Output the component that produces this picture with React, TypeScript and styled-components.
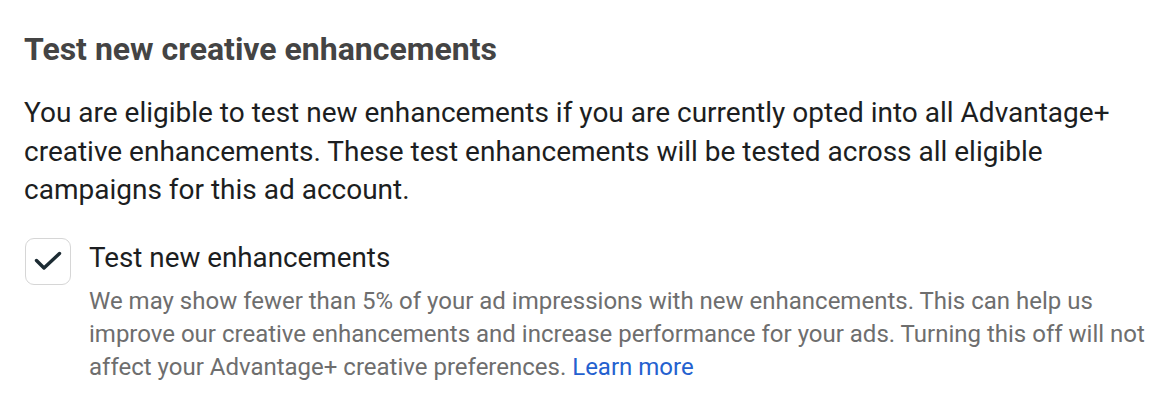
import { createGlobalStyle } from "styled-components";
import styled from "styled-components";

const GlobalStyle = createGlobalStyle`
  html, body {
    margin: 0;
    padding: 0;
    background: #ffffff;
  }
  body {
    font-family: Roboto, "Liberation Sans", Arial, sans-serif;
  }
`;

const Section = styled.section`
  width: 1176px;
  height: 414px;
  box-sizing: border-box;
  padding: 29px 24px 0 24px;
  background: #ffffff;
`;

const Title = styled.h2`
  margin: 0 0 25px 0;
  font-size: 32px;
  line-height: 40px;
  font-weight: 700;
  color: #444444;
`;

const Intro = styled.p`
  margin: 0 0 28px 0;
  font-size: 28px;
  line-height: 38.5px;
  font-weight: 400;
  color: #1c1e21;
`;

const OptionRow = styled.label`
  display: flex;
  align-items: flex-start;
  gap: 18px;
  cursor: pointer;
`;

const Checkbox = styled.span<{ $checked: boolean }>`
  flex: none;
  width: 46px;
  height: 47px;
  box-sizing: border-box;
  margin-left: 1px;
  border: 1.5px solid #d6d6d6;
  border-radius: 9px;
  background: #ffffff;
  display: flex;
  align-items: center;
  justify-content: center;
  color: ${(p) => (p.$checked ? "#1c2b33" : "transparent")};
`;

const OptionText = styled.div`
  display: flex;
  flex-direction: column;
`;

const OptionLabel = styled.span`
  font-size: 27.8px;
  line-height: 40px;
  color: #1c1e21;
  margin-bottom: 7px;
`;

const OptionHelp = styled.p`
  margin: 0;
  max-width: 1070px;
  font-size: 24px;
  line-height: 33px;
  color: #6e6e6e;
`;

const LearnMore = styled.a`
  color: #2461cf;
  text-decoration: none;
`;

function CheckIcon() {
  return (
    <svg width="28" height="28" viewBox="0 0 28 28" fill="none">
      <path
        d="M2.5 13.5L10 21L25.5 6.5"
        stroke="currentColor"
        strokeWidth="3.4"
        strokeLinecap="round"
        strokeLinejoin="round"
      />
    </svg>
  );
}

export default function App() {
  return (
    <>
      <GlobalStyle />
      <Section>
        <Title>Test new creative enhancements</Title>
        <Intro>
          You are eligible to test new enhancements if you are currently opted into all Advantage+
          creative enhancements. These test enhancements will be tested across all eligible
          campaigns for this ad account.
        </Intro>
        <OptionRow>
          <Checkbox $checked>
            <CheckIcon />
          </Checkbox>
          <OptionText>
            <OptionLabel>Test new enhancements</OptionLabel>
            <OptionHelp>
              We may show fewer than 5% of your ad impressions with new enhancements. This can help us
              improve our creative enhancements and increase performance for your ads. Turning this off
              will not affect your Advantage+ creative preferences.{" "}
              <LearnMore href="#">Learn more</LearnMore>
            </OptionHelp>
          </OptionText>
        </OptionRow>
      </Section>
    </>
  );
}
